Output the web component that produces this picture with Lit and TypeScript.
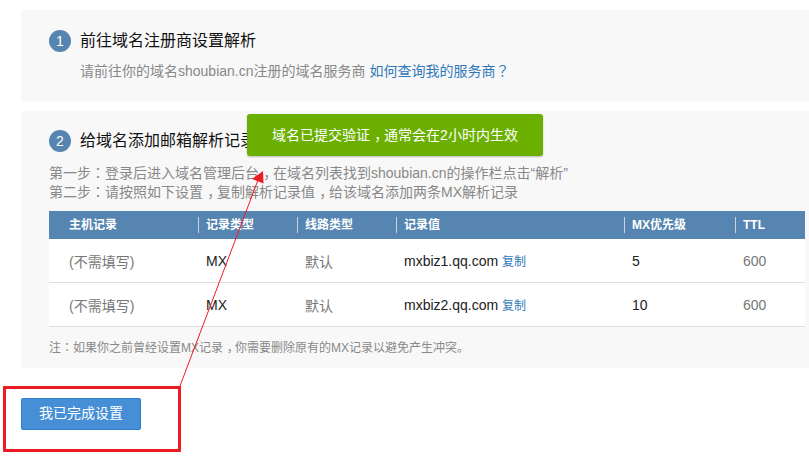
import { LitElement, html, css } from "lit";
import { customElement } from "lit/decorators.js";

const rows = [
  { value: "mxbiz1.qq.com", pri: "5" },
  { value: "mxbiz2.qq.com", pri: "10" },
];

const comma = html`<span class="c">，</span>`;
const colon = html`<span class="m">：</span>`;

@customElement("app-root")
export class AppRoot extends LitElement {
  static styles = css`
    :host {
      display: block;
      position: relative;
      width: 809px;
      height: 463px;
      overflow: hidden;
      background: #fff;
      font-family: "Liberation Sans", "Noto Sans CJK SC", sans-serif;
      font-size: 14px;
      color: #777;
    }
    .c {
      padding-left: 0.3em;
      letter-spacing: -0.3em;
    }
    .m {
      font-family: "Noto Sans CJK TC", sans-serif;
      line-height: 0;
    }
    .page {
      padding: 10px 0 0 21px;
      display: flex;
      flex-direction: column;
    }
    .panel {
      background: #f8f8f8;
      padding: 0 4px 0 28px;
    }
    .p1 { height: 91px; box-sizing: border-box; padding-top: 20px; }
    .p2 { height: 257px; box-sizing: border-box; margin-top: 10px; padding-top: 19px; }
    .title {
      display: flex;
      align-items: center;
      gap: 9px;
      height: 22px;
      font-size: 16px;
      color: #111;
    }
    .title-text { padding-bottom: 5px; }
    .num {
      width: 22px;
      height: 22px;
      border-radius: 50%;
      background: #5585b0;
      color: #fff;
      display: flex;
      align-items: center;
      justify-content: center;
      font-size: 14px;
      flex: none;
    }
    .sub {
      margin: 9px 0 0 31px;
      line-height: 20px;
      color: #888;
    }
    a { color: #2f79b8; text-decoration: none; }
    .steps {
      margin-top: 12px;
      line-height: 19px;
      color: #888;
    }
    .table { margin-top: 9px; }
    .row {
      display: grid;
      grid-template-columns: 149px 99px 99px 228px 111px 1fr;
    }
    .head {
      background: #5585b0;
      height: 28px;
      color: #fff;
      font-size: 12px;
      font-weight: bold;
      align-items: center;
    }
    .head > div {
      height: 16px;
      line-height: 16px;
      padding-left: 7px;
      border-left: 1px solid #c5d5e3;
      white-space: nowrap;
    }
    .head > div:first-child { border-left: 0; padding-left: 20px; }
    .body {
      height: 43px;
      background: #fff;
      border-bottom: 1px solid #ddd;
      align-items: center;
      white-space: nowrap;
    }
    .body > div { padding-left: 8px; }
    .body > div:first-child { padding-left: 20px; }
    .dark { color: #222; }
    .copy { font-size: 12px; color: #2f79b8; }
    .note {
      margin-top: 13px;
      font-size: 12px;
      line-height: 16px;
      color: #888;
    }
    button {
      align-self: flex-start;
      margin-top: 30px;
      width: 120px;
      height: 32px;
      background: #468fd6;
      border: 1px solid #2e7fca;
      border-radius: 2px;
      color: #fff;
      font: inherit;
      padding: 0 0 4px;
    }
    .toast {
      position: absolute;
      left: 247px;
      top: 114px;
      width: 296px;
      height: 42px;
      box-sizing: border-box;
      padding-bottom: 2px;
      background: #6bb000;
      border-radius: 3px;
      box-shadow: 0 1px 2px rgba(0, 0, 0, 0.25);
      color: #fff;
      font-size: 14px;
      display: flex;
      align-items: center;
      justify-content: center;
    }
    .notes {
      position: absolute;
      inset: 0;
      width: 809px;
      height: 463px;
      pointer-events: none;
    }
  `;

  render() {
    return html`
      <div class="page">
        <section class="panel p1">
          <div class="title"><span class="num">1</span><span class="title-text">前往域名注册商设置解析</span></div>
          <div class="sub">请前往你的域名shoubian.cn注册的域名服务商 <a>如何查询我的服务商<span class="m">？</span></a></div>
        </section>
        <section class="panel p2">
          <div class="title"><span class="num">2</span><span class="title-text">给域名添加邮箱解析记录</span></div>
          <div class="steps">
            第一步${colon}登录后进入域名管理后台${comma}在域名列表找到shoubian.cn的操作栏点击“解析”<br />
            第二步${colon}请按照如下设置${comma}复制解析记录值${comma}给该域名添加两条MX解析记录
          </div>
          <div class="table">
            <div class="row head">
              <div>主机记录</div><div>记录类型</div><div>线路类型</div><div>记录值</div><div>MX优先级</div><div>TTL</div>
            </div>
            ${rows.map(
              (r) => html`
                <div class="row body">
                  <div>(不需填写)</div>
                  <div class="dark">MX</div>
                  <div>默认</div>
                  <div class="dark">${r.value} <span class="copy">复制</span></div>
                  <div class="dark">${r.pri}</div>
                  <div>600</div>
                </div>
              `
            )}
          </div>
          <div class="note">注${colon}如果你之前曾经设置MX记录${comma}你需要删除原有的MX记录以避免产生冲突。</div>
        </section>
        <button>我已完成设置</button>
      </div>
      <div class="toast">域名已提交验证${comma}通常会在2小时内生效</div>
      <svg class="notes" viewBox="0 0 809 463">
        <rect x="4.5" y="387.5" width="175" height="63" fill="none" stroke="#ed1c24" stroke-width="3" />
        <line x1="180" y1="386" x2="258" y2="180" stroke="#ed1c24" stroke-width="1" />
        <polygon points="263,171 263.5,183.5 252,179" fill="#ed1c24" />
      </svg>
    `;
  }
}
